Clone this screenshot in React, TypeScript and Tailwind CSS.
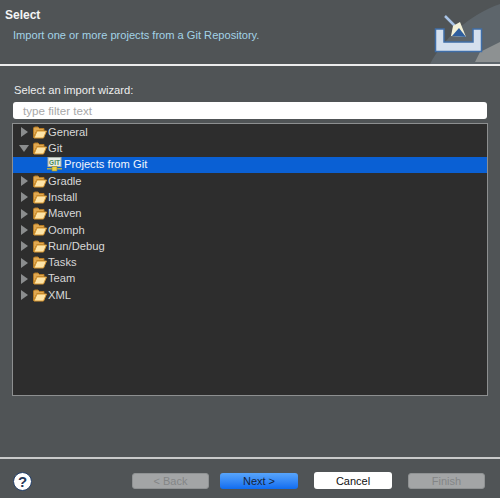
import React from "react";

const rows = [
  { label: "General", open: false },
  { label: "Git", open: true },
  { label: "Projects from Git", child: true },
  { label: "Gradle", open: false },
  { label: "Install", open: false },
  { label: "Maven", open: false },
  { label: "Oomph", open: false },
  { label: "Run/Debug", open: false },
  { label: "Tasks", open: false },
  { label: "Team", open: false },
  { label: "XML", open: false },
];

const FolderIcon = () => (
  <svg width="15" height="13" viewBox="0 0 15 13" className="shrink-0">
    <path d="M1.5 11.5V2L2.5 1H6L7.5 2.5H12V4.5H5L1.5 11.5Z" fill="#e0a850" stroke="#b47a24" />
    <path d="M2 12L5 5H14.5L11.5 12Z" fill="#fde4a8" stroke="#d8962f" />
  </svg>
);

const GitIcon = () => (
  <svg width="15" height="15" viewBox="0 0 15 15" className="shrink-0">
    <rect x="1" y="0.5" width="13" height="9" fill="#e8ece8" stroke="#a9b2a9" />
    <text x="7.5" y="7.5" textAnchor="middle" fontSize="6.5" fontWeight="700" fill="#4a8a55" fontFamily="Liberation Sans, sans-serif">GIT</text>
    <rect x="0" y="11" width="15" height="1.5" fill="#b5ad4a" />
    <rect x="5" y="9.5" width="5" height="4.5" fill="#e8d04a" stroke="#8f8a30" strokeWidth="0.6" />
  </svg>
);

const WizardIcon = () => (
  <svg width="80" height="64" viewBox="0 0 80 64" className="absolute right-0 top-0">
    <path d="M10 64C22 40 50 14 80 4V64Z" fill="#6a7580" opacity="0.5" />
    <path d="M60 52L80 42V62H55Z" fill="#a2a4a2" opacity="0.7" />
    <path d="M15.5 29H24V42H53V29H61.5V51.5H15.5Z" fill="#d5e0ee" stroke="#3f6ea8" strokeWidth="1.5" />
    <path d="M25 16L35 26" stroke="#a9c4e6" strokeWidth="2.5" />
    <path d="M31 36L33 26L40 22L46 37Z" fill="#f3f1d8" />
    <path d="M32 36L39 28L46 37Z" fill="#2f5f9e" />
  </svg>
);

const Btn = ({ label, kind }: { label: string; kind: "off" | "primary" | "plain" }) => {
  if (kind === "primary")
    return (
      <button className="w-[78px] h-[16px] rounded-[3px] bg-gradient-to-b from-[#58a5fb] to-[#0e6cf0] text-[#16243a] text-[11px] leading-[16px]">
        {label}
      </button>
    );
  if (kind === "plain")
    return (
      <button className="w-[78px] h-[17px] rounded-[3px] bg-white text-[#111111] text-[11px] leading-[16px]">
        {label}
      </button>
    );
  return (
    <button className="w-[77px] h-[16px] rounded-[3px] bg-[#a3a5a6] text-[#838586] text-[11px] leading-[14px] border border-[#8f9293]">
      {label}
    </button>
  );
};

export default function App() {
  return (
    <div className="w-[500px] h-[498px] bg-[#505456] flex flex-col font-['Liberation_Sans',sans-serif] text-[11.2px] overflow-hidden">
      {/* banner */}
      <div className="relative h-[64px] shrink-0 pl-[5px] pt-[7px]">
        <div className="font-bold text-[#f4f5f5] text-[12px] leading-[16px]">Select</div>
        <div className="mt-[4px] pl-[8px] text-[#a3d3e6] text-[11.1px] leading-[16px]">
          Import one or more projects from a Git Repository.
        </div>
        <WizardIcon />
      </div>
      <div className="h-[2px] shrink-0 bg-[#ececec]" />

      {/* body */}
      <div className="flex-1 min-h-0 flex flex-col px-[13px]">
        <div className="mt-[16px] leading-[16px] pl-[1px] text-[#eeeeee]">Select an import wizard:</div>
        <div className="mt-[4px] h-[17px] rounded-[3px] bg-white pl-[10px] text-[11.6px] leading-[17px] text-[#a8a8a8]">
          type filter text
        </div>
        <div className="mt-[4px] -mx-[1px] h-[273px] border border-[#8d8f90] bg-[#2d2d2d]">
          {rows.map((r) =>
            r.child ? (
              <div key={r.label} className="h-[16.3px] flex items-center bg-[#0a60d4] pl-[34px] gap-[2px] text-[#f2f6fc]">
                <GitIcon />
                <span>{r.label}</span>
              </div>
            ) : (
              <div key={r.label} className="h-[16.3px] flex items-center pl-[7px] text-[#d8d8d8]">
                <span className="w-[8px] flex justify-center">
                  {r.open ? (
                    <span className="w-0 h-0 border-x-[5px] border-x-transparent border-t-[7px] border-t-[#8b8d8e]" />
                  ) : (
                    <span className="w-0 h-0 border-y-[5px] border-y-transparent border-l-[7px] border-l-[#8b8d8e]" />
                  )}
                </span>
                <span className="ml-[4px] mr-[1px] flex"><FolderIcon /></span>
                <span>{r.label}</span>
              </div>
            )
          )}
        </div>
      </div>

      {/* footer */}
      <div className="h-[2px] shrink-0 bg-[#c9caca]" />
      <div className="h-[39px] shrink-0 flex items-center pl-[13px] pr-[14px] pt-[5px]">
        <div className="w-[19px] h-[19px] rounded-full bg-white border border-[#24406a] flex items-center justify-center text-[#26395a] font-bold text-[15px] leading-none">
          ?
        </div>
        <div className="ml-auto flex gap-[11px] items-center">
          <Btn label="< Back" kind="off" />
          <Btn label="Next >" kind="primary" />
          <div className="ml-[5px]"><Btn label="Cancel" kind="plain" /></div>
          <div className="ml-[5px] mr-[1px]"><Btn label="Finish" kind="off" /></div>
        </div>
      </div>
    </div>
  );
}
